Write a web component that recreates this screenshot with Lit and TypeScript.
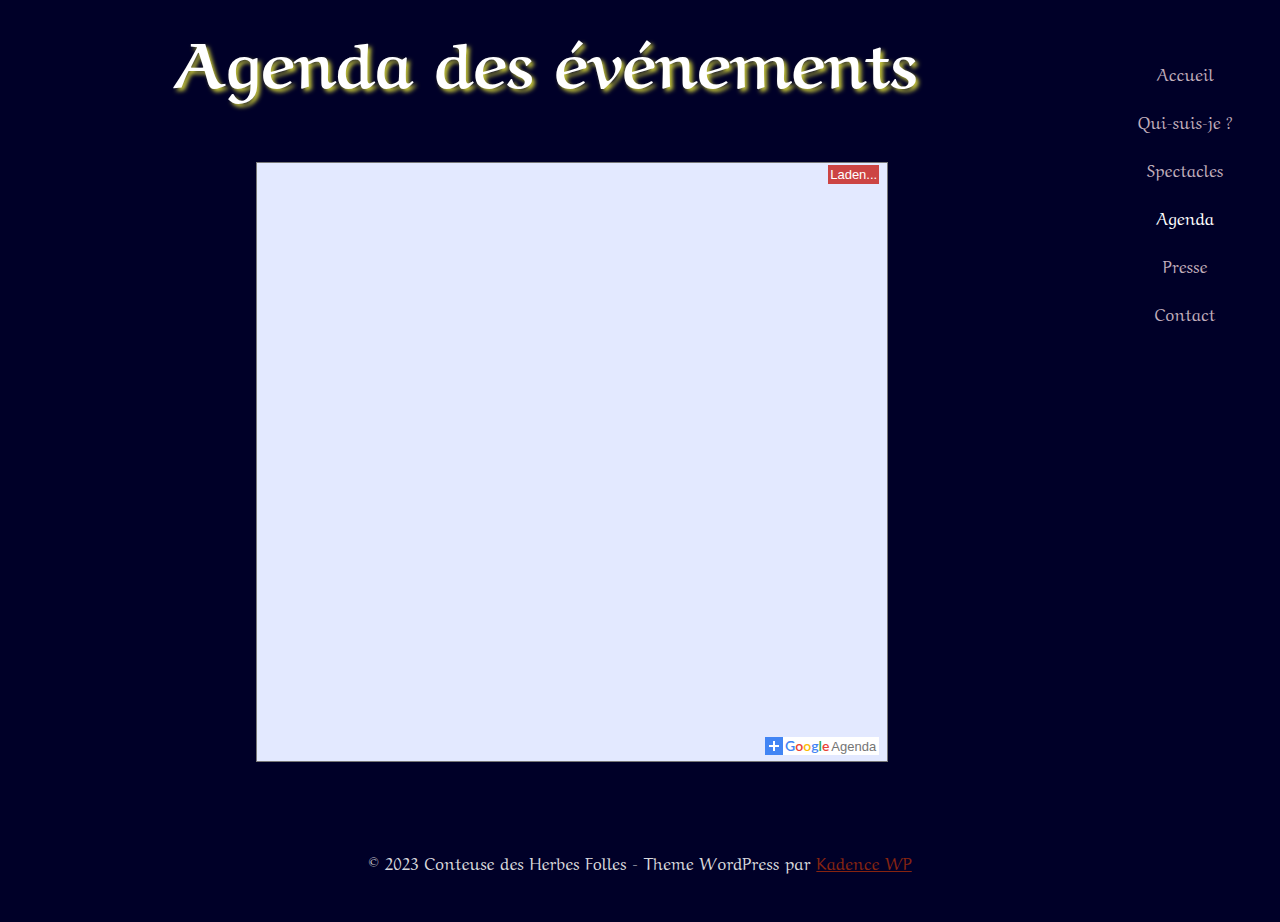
import { LitElement, html, css } from "lit";
import { customElement } from "lit/decorators.js";
import { classMap } from "lit/directives/class-map.js";

const LINKS = ["Accueil", "Qui-suis-je ?", "Spectacles", "Agenda", "Presse", "Contact"];

@customElement("agenda-calendar")
class AgendaCalendar extends LitElement {
  static styles = css`
    :host {
      display: flex;
      flex-direction: column;
      justify-content: space-between;
      align-items: flex-end;
      box-sizing: border-box;
      min-height: 600px;
      padding: 2px 8px 6px;
      border: 1px solid #777;
      background: #e3e9ff;
      font: 13px/19px "Liberation Sans", Arial, sans-serif;
    }
    .loading {
      padding: 0 2px;
      background: #c44;
      color: #fff;
    }
    .badge {
      display: flex;
      align-items: center;
      height: 18px;
      padding-right: 3px;
      background: #fff;
      color: #757575;
      text-decoration: none;
    }
    .plus {
      width: 18px;
      height: 18px;
      margin-right: 2px;
    }
    .google {
      margin-right: 2px;
      font: 600 14px/18px Lato, sans-serif;
    }
    .blue { color: #4285f4; }
    .red { color: #ea4335; }
    .yellow { color: #fbbc05; }
    .green { color: #34a853; }
  `;
  render() {
    return html`
      <div class="loading" role="status">Laden...</div>
      <a class="badge" href="#">
        <svg class="plus" viewBox="0 0 18 18" aria-hidden="true">
          <rect width="18" height="18" fill="#4285f4" />
          <path d="M4 9H14M9 4V14" stroke="#fff" stroke-width="2" />
        </svg>
        <span class="google"><span class="blue">G</span><span class="red">o</span><span class="yellow">o</span><span class="blue">g</span><span class="green">l</span><span class="red">e</span></span>
        <span>Agenda</span>
      </a>
    `;
  }
}

@customElement("app-root")
class AppRoot extends LitElement {
  static styles = css`
    :host {
      display: block;
      min-height: 100vh;
      background: #000028;
      color: #d8d8dc;
      font: 17px/28px "Aref Ruqaa", "Liberation Serif", serif;
    }
    .layout {
      display: grid;
      grid-template-columns: minmax(0, 1fr) 190px;
    }
    h1 {
      margin: 0;
      padding: 10px 0 56px;
      color: #fff;
      font-size: 64px;
      line-height: 96px;
      text-align: center;
      text-shadow: 3px 3px 4px #c8c83c;
    }
    .calendar {
      width: 58%;
      margin-left: 20vw;
    }
    nav {
      display: flex;
      flex-direction: column;
      align-items: center;
      padding-top: 49px;
    }
    .link {
      line-height: 48px;
      color: #c0aebb;
      text-decoration: none;
    }
    .current { color: #fff; }
    footer {
      padding: 86px 24px 46px;
      text-align: center;
    }
    .credit { color: #862410; }
  `;
  render() {
    return html`
      <div class="layout">
        <main>
          <h1>Agenda des événements</h1>
          <agenda-calendar class="calendar"></agenda-calendar>
        </main>
        <nav aria-label="Menu principal">
          ${LINKS.map(
            (name) => html`<a href="#" class=${classMap({ link: true, current: name === "Agenda" })}>${name}</a>`
          )}
        </nav>
      </div>
      <footer>© 2023 Conteuse des Herbes Folles - Theme WordPress par <a class="credit" href="#">Kadence WP</a></footer>
    `;
  }
}
